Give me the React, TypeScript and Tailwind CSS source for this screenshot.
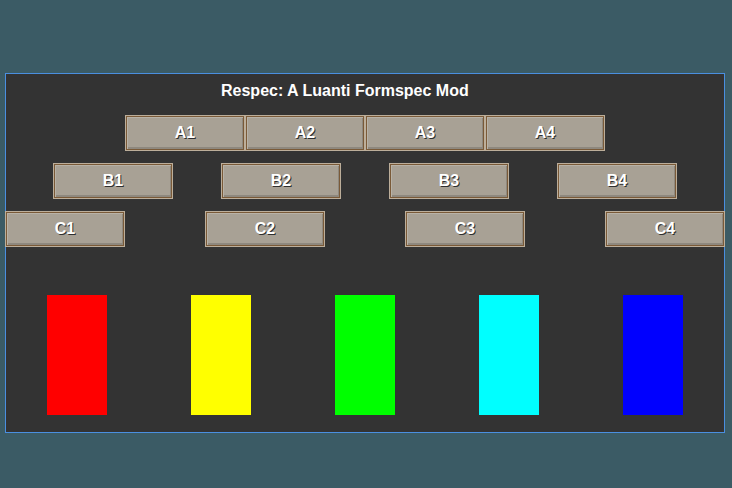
const rowA = ['A1', 'A2', 'A3', 'A4'];
const rowB = ['B1', 'B2', 'B3', 'B4'];
const rowC = ['C1', 'C2', 'C3', 'C4'];
const bars = ['bg-[#ff0000]', 'bg-[#ffff00]', 'bg-[#00ff00]', 'bg-[#00ffff]', 'bg-[#0000ff]'];

function Btn({ label }: { label: string }) {
  return (
    <div className="w-[120px] h-9 shrink-0 border border-[#bcae9a] bg-[#bcae9a]">
      <div className="w-full h-full border border-[#7a5a38] bg-[#a8a195] shadow-[inset_1px_1px_0_#b8b2a7,inset_-1px_-2px_0_#8e887e] flex items-center justify-center">
        <span className="text-white font-bold text-base [text-shadow:1px_1px_0_#2e2e2e]">{label}</span>
      </div>
    </div>
  );
}

export default function App() {
  return (
    <div className="w-[732px] h-[488px] bg-[#3b5b65] pt-[73px] pl-[5px] font-['Liberation_Sans',Arial,sans-serif]">
      <div className="w-[720px] h-[360px] border border-[#4a8fe0] bg-[#333333] flex flex-col">
        <div className="pt-[7px] h-5 box-content leading-5 text-white font-bold text-base ml-[215px]">
          Respec: A Luanti Formspec Mod
        </div>
        <div className="flex mt-[14px] pl-[119px]">
          {rowA.map(l => <Btn key={l} label={l} />)}
        </div>
        <div className="flex mt-3 pl-[47px] gap-12">
          {rowB.map(l => <Btn key={l} label={l} />)}
        </div>
        <div className="flex mt-3 -ml-px gap-20">
          {rowC.map(l => <Btn key={l} label={l} />)}
        </div>
        <div className="flex mt-12 pl-[41px] gap-[84px]">
          {bars.map(c => <div key={c} className={`w-[60px] h-[120px] ${c}`} />)}
        </div>
      </div>
    </div>
  );
}
